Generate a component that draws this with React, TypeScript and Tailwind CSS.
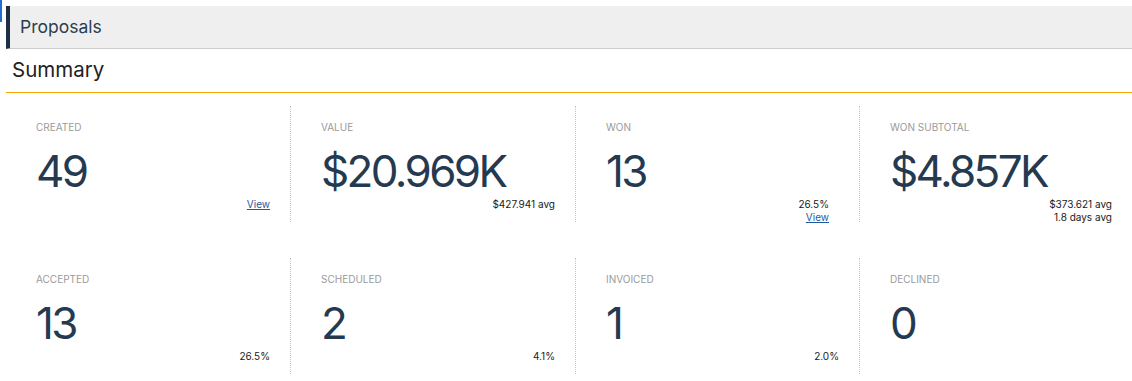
import React from "react";

type Stat = {
  label: string;
  value: string;
  lines?: { text: string; link?: boolean }[];
  pr?: string;
};

const top: Stat[] = [
  { label: "Created", value: "49", lines: [{ text: "View", link: true }] },
  { label: "Value", value: "$20.969K", lines: [{ text: "$427.941 avg" }] },
  {
    label: "Won",
    value: "13",
    lines: [{ text: "26.5%" }, { text: "View", link: true }],
    pr: "pr-[30px]",
  },
  {
    label: "Won Subtotal",
    value: "$4.857K",
    lines: [{ text: "$373.621 avg" }, { text: "1.8 days avg" }],
  },
];

const bottom: Stat[] = [
  { label: "Accepted", value: "13", lines: [{ text: "26.5%" }] },
  { label: "Scheduled", value: "2", lines: [{ text: "4.1%" }] },
  { label: "Invoiced", value: "1", lines: [{ text: "2.0%" }] },
  { label: "Declined", value: "0" },
];

const StatCard = ({ stat, first }: { stat: Stat; first: boolean }) => (
  <div
    className={`flex h-[116px] flex-col pl-[30px] pt-[14px] ${stat.pr ?? "pr-[20px]"} ${
      first ? "" : "border-l border-dotted border-[#c4c4c4]"
    }`}
  >
    <div className="text-[10px] leading-[14px] uppercase text-[#9a9a9a]">{stat.label}</div>
    <div className="mt-[15px] text-[44px] leading-none tracking-[-0.06em] text-[#253a50]">
      {stat.value}
    </div>
    <div className="mt-[5px] flex flex-col items-end text-[10px] leading-[13px] text-[#1a1a1a]">
      {stat.lines?.map((l, i) =>
        l.link ? (
          <a key={i} href="#" className="text-[#1d5a9e] underline">
            {l.text}
          </a>
        ) : (
          <span key={i}>{l.text}</span>
        )
      )}
    </div>
  </div>
);

const Row = ({ stats }: { stats: Stat[] }) => (
  <div className="grid grid-cols-[284px_285px_284px_1fr]">
    {stats.map((s, i) => (
      <StatCard key={s.label} stat={s} first={i === 0} />
    ))}
  </div>
);

export default function App() {
  return (
    <div className="relative min-h-[381px] overflow-hidden bg-white font-['Inter',sans-serif]">
      <div className="absolute left-0 top-0 h-[22px] w-[2px] bg-[#1f6fd1]" />
      <div className="pl-[6px] pt-[6px]">
        <div className="flex h-[43px] items-center border-b border-l-4 border-b-[#cccccc] border-l-[#1e2f45] bg-[#efefef] pl-[10px]">
          <span className="text-[17.5px] text-[#2b3e50]">Proposals</span>
        </div>
        <div className="flex h-[44px] items-center border-b border-[#f5a800] pl-[6px]">
          <span className="text-[20.5px] text-[#222]">Summary</span>
        </div>
        <div className="mt-[13px] flex flex-col gap-[36px]">
          <Row stats={top} />
          <Row stats={bottom} />
        </div>
      </div>
    </div>
  );
}
